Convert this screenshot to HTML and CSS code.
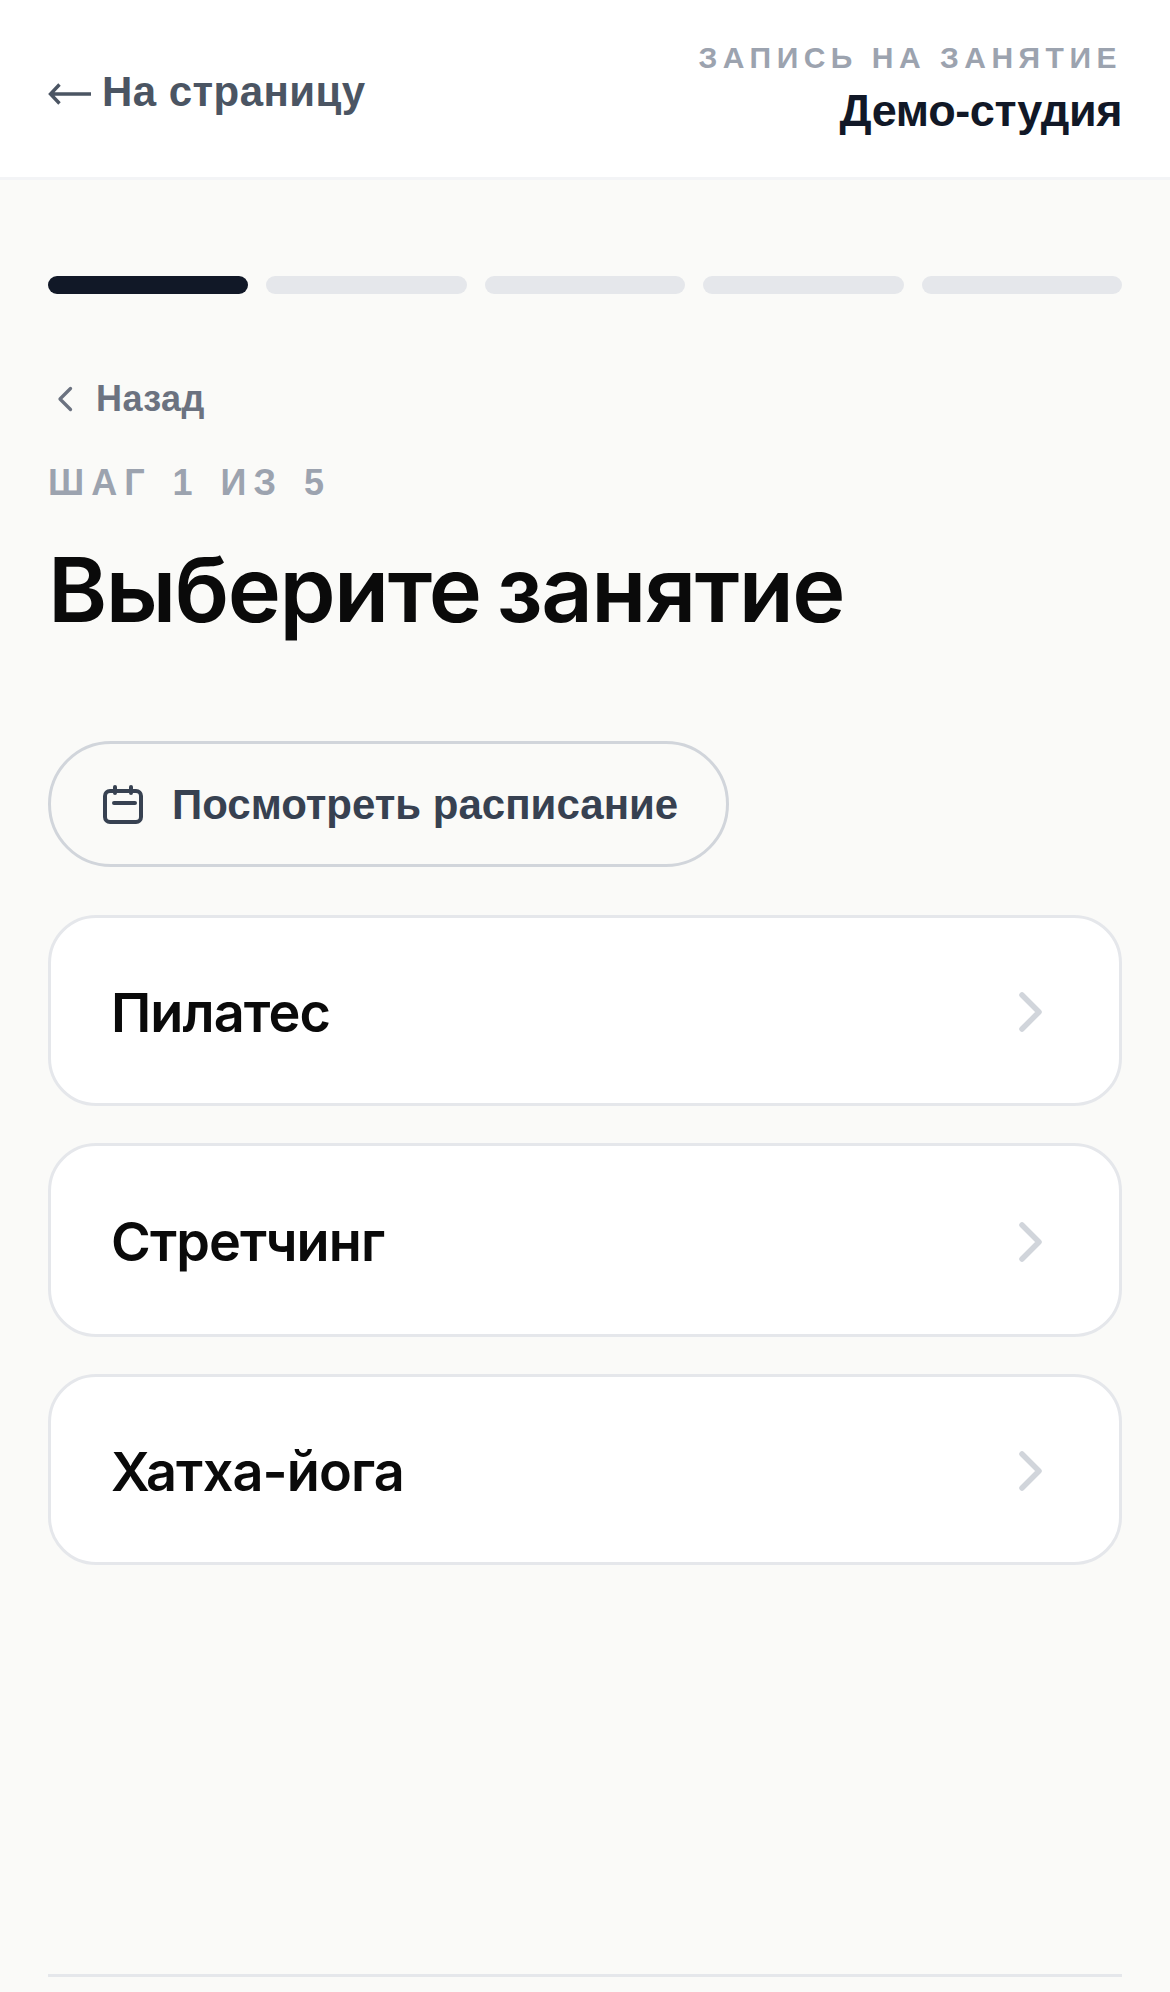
FILE: index.html
```html
<!DOCTYPE html>
<html lang="ru">
<head>
    <meta charset="UTF-8">
    <meta name="viewport" content="width=device-width, initial-scale=1.0">
    <title>Запись на занятие</title>
    <link rel="stylesheet" href="styles.css">
</head>
<body>
    <header class="topbar">
        <a class="home-link" href="#">
            <svg class="home-arrow" viewBox="0 0 43 22" fill="none" stroke="currentColor" stroke-width="3.400"><path d="M43 11H3M11.500 1.500L2.500 11l9 9.500"/></svg>
            На страницу
        </a>
        <div class="studio">
            <div class="studio-label">ЗАПИСЬ НА ЗАНЯТИЕ</div>
            <div class="studio-name">Демо-студия</div>
        </div>
    </header>
    <main class="content">
        <div class="progress">
            <div class="progress-step active"></div>
            <div class="progress-step"></div>
            <div class="progress-step"></div>
            <div class="progress-step"></div>
            <div class="progress-step"></div>
        </div>
        <a class="back-link" href="#">
            <svg class="back-icon" viewBox="0 0 24 24" fill="none" stroke="currentColor" stroke-width="2.200" stroke-linecap="round" stroke-linejoin="round"><path d="M15 5l-7 7 7 7"/></svg>
            Назад
        </a>
        <div class="step-label">ШАГ 1 ИЗ 5</div>
        <h1 class="title">Выберите занятие</h1>
        <button class="schedule-btn">
            <svg class="schedule-icon" viewBox="0 0 40 40" fill="none" stroke="currentColor" stroke-width="4" stroke-linecap="round" stroke-linejoin="round"><rect x="2" y="6" width="36" height="31" rx="5"/><path d="M12 2v6M28 2v6M11 18h21"/></svg>
            Посмотреть расписание
        </button>
        <div class="class-list">
            <a class="class-card" href="#">Пилатес
                <svg class="chevron" viewBox="0 0 24 40" fill="none" stroke="currentColor" stroke-width="5.500" stroke-linecap="round" stroke-linejoin="round"><path d="M3 3l17 17-17 17"/></svg>
            </a>
            <a class="class-card" href="#">Стретчинг
                <svg class="chevron" viewBox="0 0 24 40" fill="none" stroke="currentColor" stroke-width="5.500" stroke-linecap="round" stroke-linejoin="round"><path d="M3 3l17 17-17 17"/></svg>
            </a>
            <a class="class-card" href="#">Хатха-йога
                <svg class="chevron" viewBox="0 0 24 40" fill="none" stroke="currentColor" stroke-width="5.500" stroke-linecap="round" stroke-linejoin="round"><path d="M3 3l17 17-17 17"/></svg>
            </a>
        </div>
    </main>
    <footer class="footer"></footer>
</body>
</html>
```

FILE: styles.css
```css
* {
    box-sizing: border-box;
}

body {
    margin: 0;
    height: 1992px;
    display: flex;
    flex-direction: column;
    font-family: "Liberation Sans", Arial, sans-serif;
    background-color: #fafaf8;
    overflow: hidden;
}

a {
    text-decoration: none;
}

.topbar {
    height: 180px;
    padding: 0 48px;
    display: flex;
    align-items: center;
    justify-content: space-between;
    background-color: #fff;
    border-bottom: 3px solid #f3f4f6;
}

.home-link {
    padding-top: 6px;
    display: flex;
    align-items: center;
    gap: 11px;
    font-size: 42px;
    font-weight: 700;
    letter-spacing: 0.45px;
    color: #4b5563;
}

.home-arrow {
    width: 43px;
    height: 22px;
    margin-top: 4px;
}

.studio {
    text-align: right;
}

.studio-label {
    font-size: 30px;
    font-weight: 700;
    letter-spacing: 5.500px;
    color: #9ca3af;
}

.studio-name {
    margin-top: 10px;
    font-size: 45px;
    font-weight: 700;
    letter-spacing: -0.4px;
    color: #111827;
}

.content {
    flex: 1;
    padding: 96px 48px 0;
}

.progress {
    display: flex;
    gap: 18px;
}

.progress-step {
    flex: 1;
    height: 18px;
    border-radius: 9px;
    background-color: #e5e7eb;
}

.progress-step.active {
    background-color: #111827;
}

.back-link {
    margin-top: 84px;
    display: flex;
    align-items: center;
    gap: 12px;
    font-size: 36px;
    font-weight: 700;
    letter-spacing: 0.4px;
    color: #6b7280;
}

.back-icon {
    width: 36px;
    height: 36px;
}

.step-label {
    margin-top: 42px;
    font-size: 36px;
    font-weight: 700;
    letter-spacing: 7px;
    word-spacing: 4px;
    color: #9ca3af;
}

.title {
    margin: 31px 0 0;
    font-size: 90px;
    font-weight: 600;
    letter-spacing: -1.500px;
    word-spacing: -5px;
    font-family: Inter, "Liberation Sans", sans-serif;
    color: #0a0a0a;
}

.schedule-btn {
    margin-top: 97px;
    height: 126px;
    padding: 2px 48px 0 52px;
    display: flex;
    align-items: center;
    gap: 29px;
    font-family: inherit;
    font-size: 42px;
    font-weight: 700;
    color: #374151;
    background: none;
    border: 3px solid #d1d5db;
    border-radius: 63px;
}

.schedule-icon {
    width: 40px;
    height: 40px;
}

.class-list {
    margin-top: 48px;
    display: flex;
    flex-direction: column;
    gap: 37px;
}

.class-card {
    height: 191px;
    padding: 3px 76px 0 60px;
    display: flex;
    align-items: center;
    justify-content: space-between;
    font-size: 54px;
    font-family: Inter, "Liberation Sans", sans-serif;
    font-weight: 600;
    letter-spacing: -0.9px;
    color: #0a0a0a;
    background-color: #fff;
    border: 3px solid #e5e7eb;
    border-radius: 48px;
}

.class-card:nth-child(2) {
    height: 194px;
}

.chevron {
    width: 24px;
    height: 40px;
    color: #d1d5db;
}

.footer {
    height: 18px;
    margin: 0 48px;
    border-top: 3px solid #e5e7eb;
}
```
